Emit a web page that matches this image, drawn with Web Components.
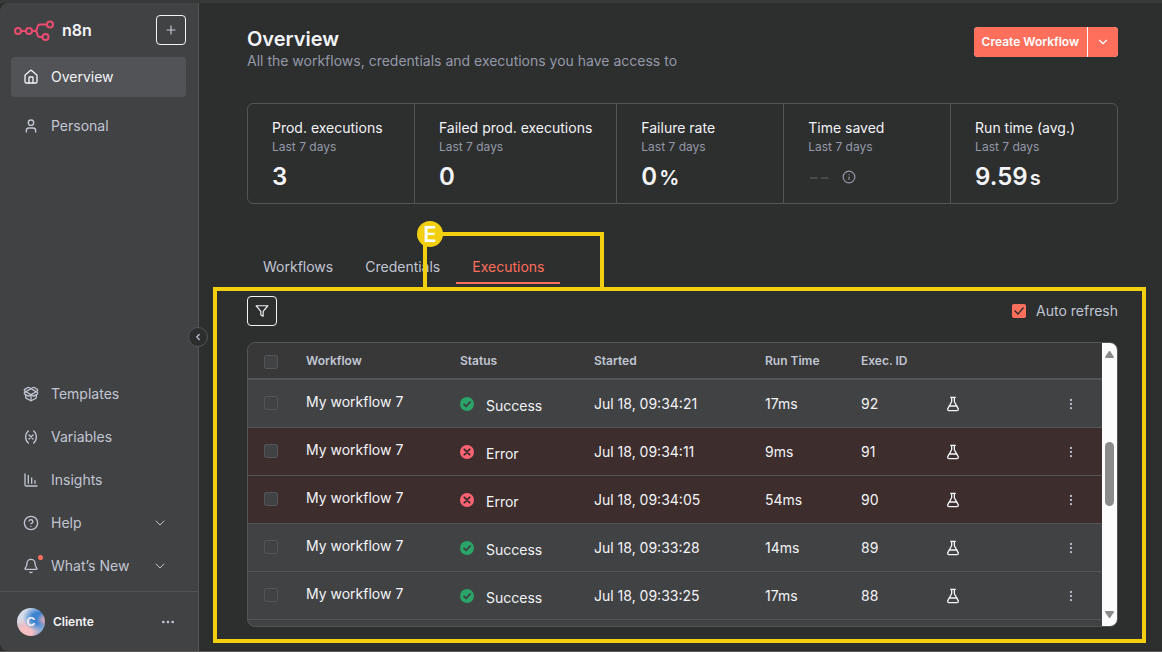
<!DOCTYPE html>
<html lang="en">
<head>
<meta charset="utf-8">
<meta name="viewport" content="width=device-width, initial-scale=1">
<title>Overview - n8n</title>
<style>
    :root {
        --bg: #2d2e2e;
        --panel: #414244;
        --panel-active: #525356;
        --line: #535456;
        --text: #f3f4f8;
        --text-soft: #c1c6d3;
        --text-dim: #9499a8;
        --primary: #ff6f5c;
        --mark: #f2d011;
    }
    body {
        margin: 0;
        background: var(--bg);
        color: var(--text);
        font: 14px/20px Inter, "Liberation Sans", sans-serif;
    }
</style>
</head>
<body>
<app-shell>
    <app-sidebar slot="sidebar"></app-sidebar>
    <page-header heading="Overview" subtitle="All the workflows, credentials and executions you have access to"></page-header>
    <stat-list>
        <stat-card label="Prod. executions" value="3"></stat-card>
        <stat-card label="Failed prod. executions" value="0"></stat-card>
        <stat-card label="Failure rate" value="0" unit="%"></stat-card>
        <stat-card label="Time saved" value="--" empty></stat-card>
        <stat-card label="Run time (avg.)" value="9.59" unit="s"></stat-card>
    </stat-list>
    <tab-bar></tab-bar>
    <executions-panel></executions-panel>
</app-shell>

<script>
const ICONS = {
    house: '<path d="M15 21v-8a1 1 0 0 0-1-1h-4a1 1 0 0 0-1 1v8"/><path d="M3 10a2 2 0 0 1 .7-1.5l7-6a2 2 0 0 1 2.6 0l7 6A2 2 0 0 1 21 10v9a2 2 0 0 1-2 2H5a2 2 0 0 1-2-2z"/>',
    user: '<path d="M19 21v-2a4 4 0 0 0-4-4H9a4 4 0 0 0-4 4v2"/><circle cx="12" cy="7" r="4"/>',
    package: '<path d="M12 22v-9"/><path d="M15.17 2.21a1.67 1.67 0 0 1 1.63 0L21 4.57a1.93 1.93 0 0 1 0 3.36L8.82 14.79a1.66 1.66 0 0 1-1.64 0L3 12.43a1.93 1.93 0 0 1 0-3.36z"/><path d="M20 13v3.87a2.06 2.06 0 0 1-1.11 1.83l-6 3.08a1.93 1.93 0 0 1-1.78 0l-6-3.08A2.06 2.06 0 0 1 4 16.87V13"/><path d="M21 12.43a1.93 1.93 0 0 0 0-3.36L8.83 2.2a1.64 1.64 0 0 0-1.63 0L3 4.57a1.93 1.93 0 0 0 0 3.36l12.18 6.86a1.64 1.64 0 0 0 1.63 0z"/>',
    variable: '<path d="M8 21s-4-3-4-9 4-9 4-9"/><path d="M16 3s4 3 4 9-4 9-4 9"/><path d="m15 9-6 6M9 9l6 6"/>',
    chart: '<path d="M3 3v16a2 2 0 0 0 2 2h16"/><path d="M8 5v12M13 9v8M18 13v4"/>',
    help: '<circle cx="12" cy="12" r="10"/><path d="M9.1 9a3 3 0 0 1 5.8 1c0 2-3 3-3 3"/><path d="M12 17h.01"/>',
    bell: '<path d="M10.27 21a2 2 0 0 0 3.46 0"/><path d="M3.26 15.33A1 1 0 0 0 4 17h16a1 1 0 0 0 .74-1.67C19.41 13.96 18 12.5 18 8A6 6 0 0 0 6 8c0 4.5-1.41 5.96-2.74 7.33"/>',
    plus: '<path d="M5 12h14M12 5v14"/>',
    down: '<path d="m6 9 6 6 6-6"/>',
    left: '<path d="m15 18-6-6 6-6"/>',
    info: '<circle cx="12" cy="12" r="10"/><path d="M12 16v-4M12 8h.01"/>',
    funnel: '<path d="M22 3H2l8 9.46V19l4 2v-8.54z"/>',
    flask: '<path d="M14 2v6a2 2 0 0 0 .25.96l5.51 10.08A2 2 0 0 1 18 22H6a2 2 0 0 1-1.76-2.96l5.51-10.08A2 2 0 0 0 10 8V2"/><path d="M6.5 15h11M8.5 2h7"/>',
    more: '<g fill="currentColor"><circle cx="12" cy="12" r="1"/><circle cx="19" cy="12" r="1"/><circle cx="5" cy="12" r="1"/></g>',
    dots: '<g fill="currentColor"><circle cx="12" cy="12" r="1"/><circle cx="12" cy="5" r="1"/><circle cx="12" cy="19" r="1"/></g>',
    success: '<circle cx="12" cy="12" r="12" fill="#29a568" stroke="none"/><path d="m7 12.5 3.5 3.5 7-7.5" stroke="#414244" stroke-width="3"/>',
    error: '<circle cx="12" cy="12" r="12" fill="#ff6474" stroke="none"/><path d="m7.500 7.500 9 9M16.500 7.500l-9 9" stroke="#3d2d2d" stroke-width="3.500"/>'
};

class UiIcon extends HTMLElement {
    constructor() {
        super();
        this.attachShadow({ mode: 'open' });
    }

    connectedCallback() {
        const size = this.getAttribute('size') || 16;
        this.shadowRoot.innerHTML = `
            <style>
                :host { display: block; flex: none; width: ${size}px; height: ${size}px; }
                svg { display: block; }
            </style>
            <svg width="${size}" height="${size}" viewBox="0 0 24 24" fill="none" stroke="currentColor"
                stroke-width="${this.getAttribute('stroke') || 2}" stroke-linecap="round" stroke-linejoin="round"
                aria-hidden="true">${ICONS[this.getAttribute('name')]}</svg>
        `;
    }
}

class AppShell extends HTMLElement {
    constructor() {
        super();
        this.attachShadow({ mode: 'open' });
        this.shadowRoot.innerHTML = `
            <style>
                :host {
                    display: grid;
                    grid-template-columns: 199px minmax(0, 1fr);
                    box-sizing: border-box;
                    height: 100vh;
                    border-top: 3px solid #393939;
                    border-bottom: 1px solid #5a5a5a;
                }
                main {
                    display: flex;
                    flex-direction: column;
                    min-width: 0;
                    min-height: 0;
                    padding: 24px 44px 24px 48px;
                }
            </style>
            <slot name="sidebar"></slot>
            <main><slot></slot></main>
        `;
    }
}

class NavItem extends HTMLElement {
    constructor() {
        super();
        this.attachShadow({ mode: 'open' });
    }

    connectedCallback() {
        const chevron = this.hasAttribute('expandable') ? '<ui-icon name="down" stroke="1.5"></ui-icon>' : '';
        const dot = this.hasAttribute('unread') ? '<i></i>' : '';
        this.shadowRoot.innerHTML = `
            <style>
                :host { display: block; }
                a {
                    display: flex;
                    align-items: center;
                    gap: 12px;
                    height: 40px;
                    padding: 0 18px 0 12px;
                    border-radius: 4px;
                    color: var(--text-soft);
                    text-decoration: none;
                }
                :host([active]) a { background: var(--panel-active); color: var(--text); }
                .label { flex: 1; }
                .icon { position: relative; }
                i {
                    position: absolute;
                    top: -3px;
                    right: -4px;
                    width: 5px;
                    height: 5px;
                    border-radius: 50%;
                    background: var(--primary);
                }
            </style>
            <a href="#">
                <span class="icon"><ui-icon name="${this.getAttribute('icon')}"></ui-icon>${dot}</span>
                <span class="label"><slot></slot></span>
                ${chevron}
            </a>
        `;
    }
}

class AppSidebar extends HTMLElement {
    constructor() {
        super();
        this.attachShadow({ mode: 'open' });
        this.shadowRoot.innerHTML = `
            <style>
                :host {
                    position: relative;
                    display: flex;
                    flex-direction: column;
                    min-height: 0;
                    border-right: 1px solid var(--line);
                    border-radius: 8px 0 0 8px;
                    background: var(--panel);
                }
                button {
                    display: grid;
                    place-items: center;
                    padding: 0;
                    background: none;
                    color: var(--text-soft);
                }
                header {
                    display: flex;
                    align-items: center;
                    gap: 7px;
                    padding: 12px 12px 12px 14px;
                    font-size: 16px;
                    font-weight: 600;
                }
                header span { flex: 1; }
                .add {
                    width: 30px;
                    height: 30px;
                    border: 1px solid var(--text);
                    border-radius: 4px;
                }
                nav {
                    display: flex;
                    flex-direction: column;
                    gap: 9px;
                    padding: 0 12px 0 11px;
                }
                .bottom { gap: 3px; margin-top: auto; padding-bottom: 5px; }
                footer {
                    display: flex;
                    align-items: center;
                    gap: 8px;
                    height: 59px;
                    padding: 0 22px 0 17px;
                    border-top: 1px solid var(--line);
                    font-size: 12px;
                    font-weight: 600;
                }
                footer span { flex: 1; }
                footer button { border: 0; }
                .avatar {
                    display: grid;
                    place-items: center;
                    width: 28px;
                    height: 28px;
                    border-radius: 50%;
                    background:
                        radial-gradient(circle at 98% 42%, #c9a5bd 0 6%, transparent 24%),
                        radial-gradient(ellipse at 78% 36%, #3b82cf 0 22%, transparent 52%),
                        radial-gradient(circle at 30% 90%, #f6bfc1 0 20%, transparent 50%),
                        linear-gradient(#d5dcea 50%, #5c8fca);
                }
                .collapse {
                    position: absolute;
                    top: 50%;
                    right: -10px;
                    width: 20px;
                    height: 20px;
                    border: 1px solid var(--line);
                    border-radius: 50%;
                    background: var(--bg);
                }
            </style>
            <header>
                <svg width="41" height="22" viewBox="0 0 41 22" fill="none" stroke="#ea4b71" stroke-width="2" aria-hidden="true">
                    <circle cx="4" cy="12" r="3"/>
                    <circle cx="15" cy="12" r="3"/>
                    <circle cx="36" cy="5.500" r="3"/>
                    <circle cx="31.500" cy="18" r="3"/>
                    <path d="M7 12h5M18 12h2.500c1.500 0 2.200-.9 2.500-2.200l.5-2C23.900 6.300 24.800 5.500 26 5.500h7M20.500 12c1.500 0 2.200.8 2.500 2l.5 2c.3 1.400 1.300 2 2.500 2h2.500"/>
                </svg>
                <span>n8n</span>
                <button class="add" aria-label="Add"><ui-icon name="plus" size="14"></ui-icon></button>
            </header>
            <nav>
                <nav-item icon="house" active>Overview</nav-item>
                <nav-item icon="user">Personal</nav-item>
            </nav>
            <nav class="bottom">
                <nav-item icon="package">Templates</nav-item>
                <nav-item icon="variable">Variables</nav-item>
                <nav-item icon="chart">Insights</nav-item>
                <nav-item icon="help" expandable>Help</nav-item>
                <nav-item icon="bell" expandable unread>What’s New</nav-item>
            </nav>
            <footer>
                <div class="avatar">C</div>
                <span>Cliente</span>
                <button aria-label="User menu"><ui-icon name="more"></ui-icon></button>
            </footer>
            <button class="collapse" aria-label="Collapse sidebar"><ui-icon name="left" size="10" stroke="3"></ui-icon></button>
        `;
    }
}

class PageHeader extends HTMLElement {
    constructor() {
        super();
        this.attachShadow({ mode: 'open' });
    }

    connectedCallback() {
        this.shadowRoot.innerHTML = `
            <style>
                :host {
                    display: flex;
                    justify-content: space-between;
                    align-items: flex-start;
                    margin-bottom: 32px;
                }
                h1 { margin: 0; font-size: 20px; line-height: 24px; font-weight: 600; }
                p { margin: 0; color: var(--text-dim); }
                .split { display: flex; gap: 1px; border-radius: 4px; overflow: hidden; background: #ffffff; }
                button {
                    display: grid;
                    place-items: center;
                    height: 30px;
                    border: 0;
                    padding: 0 8px;
                    background: var(--primary);
                    color: #ffffff;
                    font: 600 12px/20px Inter, sans-serif;
                }
            </style>
            <div>
                <h1>${this.getAttribute('heading')}</h1>
                <p>${this.getAttribute('subtitle')}</p>
            </div>
            <div class="split">
                <button>Create Workflow</button>
                <button aria-label="More options"><ui-icon name="down" size="14"></ui-icon></button>
            </div>
        `;
    }
}

class StatList extends HTMLElement {
    constructor() {
        super();
        this.attachShadow({ mode: 'open' });
        this.shadowRoot.innerHTML = `
            <style>
                :host {
                    display: flex;
                    border: 1px solid var(--line);
                    border-radius: 6px;
                }
                ::slotted(*) { flex: 1 1 0; }
                ::slotted(:not(:last-child)) { border-right: 1px solid var(--line); }
            </style>
            <slot></slot>
        `;
    }
}

class StatCard extends HTMLElement {
    constructor() {
        super();
        this.attachShadow({ mode: 'open' });
    }

    connectedCallback() {
        const unit = this.getAttribute('unit');
        const info = this.hasAttribute('empty') ? '<ui-icon name="info" size="14"></ui-icon>' : '';
        this.shadowRoot.innerHTML = `
            <style>
                :host { display: block; padding: 14px 24px 10px; white-space: nowrap; }
                .period { color: var(--text-dim); font-size: 12px; line-height: 18px; }
                .value {
                    display: flex;
                    align-items: baseline;
                    gap: 2px;
                    margin-top: 5px;
                    font-size: 24px;
                    line-height: 32px;
                    font-weight: 600;
                }
                .unit { font-size: 20px; line-height: 24px; }
                :host([empty]) .value { align-items: center; gap: 12px; color: #48494b; font-weight: 400; }
                ui-icon { color: var(--text-dim); }
            </style>
            <div>${this.getAttribute('label')}</div>
            <div class="period">Last 7 days</div>
            <div class="value"><span>${this.getAttribute('value')}</span>${unit ? `<span class="unit">${unit}</span>` : ''}${info}</div>
        `;
    }
}

class TabBar extends HTMLElement {
    constructor() {
        super();
        this.attachShadow({ mode: 'open' });
        this.shadowRoot.innerHTML = `
            <style>
                :host { position: relative; display: flex; margin: 46px 0 12px; }
                a {
                    padding: 7px 16px 5px;
                    border-bottom: 2px solid transparent;
                    color: var(--text-soft);
                    text-decoration: none;
                }
                .active { border-color: var(--primary); color: var(--primary); }
                .mark {
                    position: absolute;
                    left: 176px;
                    top: -18px;
                    width: 173px;
                    height: 55px;
                    border: 4px solid var(--mark);
                    border-bottom: 0;
                }
                .badge {
                    position: absolute;
                    left: -10px;
                    top: -15px;
                    width: 26px;
                    height: 26px;
                    border-radius: 50%;
                    background: var(--mark);
                    color: #ffffff;
                    font: 600 22px/26px Inter, "Liberation Sans", sans-serif;
                    text-align: center;
                }
            </style>
            <a href="#">Workflows</a>
            <a href="#">Credentials</a>
            <a href="#" class="active">Executions</a>
            <div class="mark"><span class="badge">E</span></div>
        `;
    }
}

class ExecutionsTable extends HTMLElement {
    constructor() {
        super();
        this.attachShadow({ mode: 'open' });
    }

    connectedCallback() {
        const rows = [
            ['Success', 'Jul 18, 09:34:21', '17ms', 92],
            ['Error', 'Jul 18, 09:34:11', '9ms', 91],
            ['Error', 'Jul 18, 09:34:05', '54ms', 90],
            ['Success', 'Jul 18, 09:33:28', '14ms', 89],
            ['Success', 'Jul 18, 09:33:25', '17ms', 88]
        ];
        this.shadowRoot.innerHTML = `
            <style>
                :host {
                    display: flex;
                    align-items: stretch;
                    overflow: hidden;
                    border: 1px solid var(--line);
                    border-radius: 8px;
                    background: var(--panel);
                }
                .view { flex: 1; min-width: 0; overflow: hidden; }
                table { width: 100%; table-layout: fixed; border-collapse: separate; border-spacing: 0; }
                th, td { box-sizing: border-box; padding: 0; text-align: left; vertical-align: middle; }
                th {
                    height: 37px;
                    border-bottom: 2px solid var(--line);
                    background: #383838;
                    color: var(--text-soft);
                    font-size: 12px;
                    font-weight: 600;
                }
                td { height: 48px; border-bottom: 1px solid var(--line); }
                .error td { background: #3d2d2d; }
                .pick { padding-left: 16px; }
                th.pick { padding-top: 2px; }
                td.pick { padding-bottom: 1px; }
                td.name { padding-bottom: 4px; }
                .name a { color: inherit; text-decoration: none; }
                input {
                    appearance: none;
                    display: block;
                    box-sizing: border-box;
                    width: 14px;
                    height: 14px;
                    margin: 0;
                    border: 1px solid var(--line);
                    border-radius: 2px;
                    background: var(--panel);
                }
                .status { display: flex; gap: 12px; align-items: flex-start; padding-top: 4px; line-height: 18px; }
                button {
                    display: block;
                    margin: 0 24px 0 auto;
                    border: 0;
                    padding: 0;
                    background: none;
                    color: #b3b7c4;
                }
                .scroll {
                    display: flex;
                    flex-direction: column;
                    align-items: center;
                    width: 15px;
                    padding: 8px 0;
                    box-sizing: border-box;
                    background: #fcfcfc;
                    color: #8b8b8b;
                }
                .scroll svg { display: block; }
                .track { display: flex; flex-direction: column; flex: 1; }
                .track::before { content: ""; flex: 84; }
                .track::after { content: ""; flex: 105; }
                .thumb { flex: 64; width: 9px; border-radius: 5px; background: #8b8b8b; }
            </style>
            <div class="view">
                <table>
                    <colgroup>
                        <col style="width: 58px"><col style="width: 154px"><col style="width: 134px">
                        <col style="width: 171px"><col style="width: 96px"><col style="width: 84px"><col>
                        <col>
                    </colgroup>
                    <thead>
                        <tr>
                            <th class="pick"><input type="checkbox" aria-label="Select all"></th>
                            <th>Workflow</th><th>Status</th><th>Started</th><th>Run Time</th><th>Exec. ID</th><th></th><th></th>
                        </tr>
                    </thead>
                    <tbody>${rows.map(row => this.renderRow(row)).join('')}</tbody>
                </table>
            </div>
            <div class="scroll" aria-hidden="true">
                <svg width="9" height="7" viewBox="0 0 9 7"><path d="M4 0h1l4 6-.5 1h-8L0 6z" fill="currentColor"/></svg>
                <div class="track"><div class="thumb"></div></div>
                <svg width="9" height="7" viewBox="0 0 9 7"><path d="M4 7h1l4-6-.5-1h-8L0 1z" fill="currentColor"/></svg>
            </div>
        `;
    }

    renderRow([status, started, time, id]) {
        const kind = status.toLowerCase();
        return `
            <tr class="${kind}">
                <td class="pick"><input type="checkbox" aria-label="Select execution ${id}"></td>
                <td class="name"><a href="#">My workflow 7</a></td>
                <td><div class="status"><ui-icon name="${kind}" size="14"></ui-icon><span>${status}</span></div></td>
                <td>${started}</td>
                <td>${time}</td>
                <td>${id}</td>
                <td><ui-icon name="flask"></ui-icon></td>
                <td><button aria-label="Actions"><ui-icon name="dots" size="14"></ui-icon></button></td>
            </tr>
        `;
    }
}

class ExecutionsPanel extends HTMLElement {
    constructor() {
        super();
        this.attachShadow({ mode: 'open' });
        this.shadowRoot.innerHTML = `
            <style>
                :host {
                    position: relative;
                    display: flex;
                    flex-direction: column;
                    flex: 1;
                    gap: 16px;
                    min-height: 0;
                }
                .tools { display: flex; align-items: center; justify-content: space-between; }
                .filter {
                    display: grid;
                    place-items: center;
                    width: 30px;
                    height: 30px;
                    border: 1px solid var(--text);
                    border-radius: 4px;
                    padding: 0;
                    background: none;
                    color: var(--text);
                }
                label { display: flex; align-items: center; gap: 10px; color: var(--text-soft); }
                input {
                    appearance: none;
                    width: 14px;
                    height: 14px;
                    margin: 0;
                    border-radius: 2px;
                    background: var(--primary);
                }
                input:checked::before {
                    content: "";
                    display: block;
                    width: 14px;
                    height: 14px;
                    background: var(--bg);
                    clip-path: polygon(2px 7px, 3px 6px, 6px 9px, 11px 3px, 12px 4px, 6px 11px);
                }
                executions-table { flex: 1; min-height: 0; }
                .mark {
                    position: absolute;
                    inset: -9px -28px -16px -34px;
                    border: 4px solid var(--mark);
                    pointer-events: none;
                }
            </style>
            <div class="tools">
                <button class="filter" aria-label="Filter"><ui-icon name="funnel" size="14"></ui-icon></button>
                <label><input type="checkbox" checked>Auto refresh</label>
            </div>
            <executions-table></executions-table>
            <div class="mark"></div>
        `;
    }
}

customElements.define('ui-icon', UiIcon);
customElements.define('nav-item', NavItem);
customElements.define('app-sidebar', AppSidebar);
customElements.define('page-header', PageHeader);
customElements.define('stat-card', StatCard);
customElements.define('stat-list', StatList);
customElements.define('tab-bar', TabBar);
customElements.define('executions-table', ExecutionsTable);
customElements.define('executions-panel', ExecutionsPanel);
customElements.define('app-shell', AppShell);
</script>
</body>
</html>
